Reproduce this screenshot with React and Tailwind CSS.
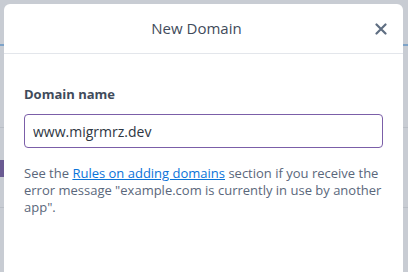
import React from 'react';

// Backdrop page with the "New Domain" modal on top
const App = () =>
{
  return (
    <div className="relative w-[408px] h-[272px] overflow-hidden bg-[#c8ccd3] font-['Open_Sans',sans-serif]">
      {/* Faint page pieces behind the overlay */ }
      <div className="absolute inset-0 flex flex-col">
        <div className="h-[44px]" />
        <div className="h-[2px] bg-[#7ea3c8]" />
        <div className="h-[81px]" />
        <div className="h-px bg-[#b9bec6]" />
        <div className="h-[32px]" />
        <div className="h-[17px] w-[4px] bg-[#6a5b92]" />
        <div className="h-[30px]" />
        <div className="h-px bg-[#b9bec6]" />
      </div>

      {/* Modal */ }
      <div className="absolute left-[4px] top-[4px] w-[399px] h-[300px] bg-white rounded-t-[6px]">
        <div className="relative h-[50px] flex items-center justify-center pr-[14px] border-b border-[#e3e6eb]">
          <h2 className="text-[15px] text-[#3f4b5b] leading-none">New Domain</h2>
          <button className="absolute right-[14px] top-[17px] w-[16px] h-[16px] flex items-center justify-center text-[#5f6e82]">
            <svg width="12" height="12" viewBox="0 0 12 12" fill="none" stroke="currentColor" strokeWidth="2.2" strokeLinecap="round">
              <path d="M1.5 1.5 L10.5 10.5 M10.5 1.5 L1.5 10.5" />
            </svg>
          </button>
        </div>

        <div className="px-[20px] pt-[31px] flex flex-col">
          <label className="block text-[13px] font-bold text-[#3f4b5b] leading-[18px]">Domain name</label>
          <input
            readOnly
            value="www.migrmrz.dev"
            className="mt-[11px] w-full h-[34px] px-[8px] rounded-[4px] border border-[#7b5ea8] text-[14px] text-[#2e3642] outline-none"
          />
          <p className="mt-[17px] text-[13px] leading-[17px] text-[#5a677b]">
            See the <a className="text-[#0a73d9] underline">Rules on adding domains</a> section if you receive the error message "example.com is currently in use by another app".
          </p>
        </div>
      </div>
    </div>
  );
};

export default App;
